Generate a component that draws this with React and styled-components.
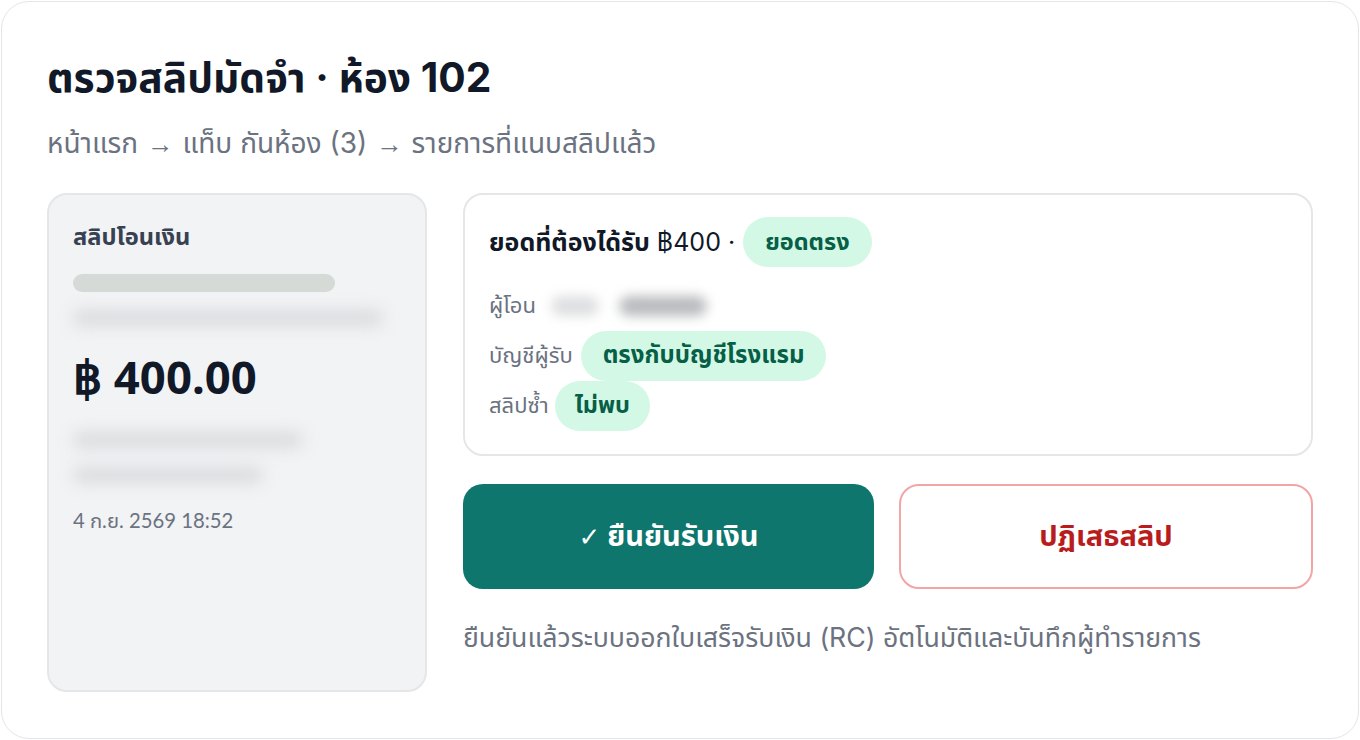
import React from 'react';
import styled, { createGlobalStyle } from 'styled-components';

const GlobalStyle = createGlobalStyle`
  html, body {
    margin: 0;
    padding: 0;
    background: #ffffff;
  }
  body {
    font-family: "Inter", "Noto Sans Thai", "Noto Sans", sans-serif;
    color: #111827;
  }
  * {
    box-sizing: border-box;
  }
`;

const Card = styled.div`
  margin: 1px;
  height: 738px;
  border: 1px solid #e3e5e8;
  border-radius: 28px;
  padding: 50px 45px 46px;
  display: flex;
  flex-direction: column;
`;

const Title = styled.h1`
  margin: 0;
  font-size: 40.7px;
  font-weight: 700;
  line-height: 52px;
  color: #111827;
`;

const Crumbs = styled.div`
  margin-top: 21px;
  font-size: 28px;
  line-height: 36px;
  color: #6b7280;
`;

const Arrow = styled.span`
  font-family: "Noto Sans", sans-serif;
  font-size: 0.95em;
  margin: 0 1px;
`;

const Body = styled.div`
  margin-top: 32px;
  flex: 1;
  display: grid;
  grid-template-columns: 380px 1fr;
  gap: 36px;
`;

const Slip = styled.div`
  background: #f2f3f5;
  border: 2px solid #e4e6e8;
  border-radius: 20px;
  padding: 25px 24px;
  display: flex;
  flex-direction: column;
  font-family: "Lato", "Noto Sans Thai", "Noto Sans", sans-serif;
`;

const SlipTitle = styled.div`
  font-family: "Noto Sans", "Noto Sans Thai", sans-serif;
  font-size: 23.7px;
  font-weight: 700;
  color: #374151;
  line-height: 32px;
`;

const Bar = styled.div`
  margin-top: 22px;
  width: 262px;
  height: 18px;
  border-radius: 9px;
  background: #d5dad7;
`;

const Blur = styled.div`
  margin-top: ${(p) => p.$gap}px;
  width: ${(p) => p.$w}px;
  height: 16px;
  background: #d8dbdd;
  border-radius: 8px;
  filter: blur(8px);
`;

const Amount = styled.div`
  margin-top: 22px;
  font-family: "Noto Sans", "Open Sans", sans-serif;
  font-size: 45.5px;
  font-weight: 700;
  color: #111827;
  line-height: 56px;
`;

const SlipDate = styled.div`
  margin-top: 24px;
  font-size: 20.3px;
  color: #6b7280;
  line-height: 26px;
`;

const Right = styled.div`
  display: flex;
  flex-direction: column;
`;

const Checks = styled.div`
  border: 2px solid #e4e6e8;
  border-radius: 20px;
  padding: 22px 24px 23px;
  display: flex;
  flex-direction: column;
`;

const Headline = styled.div`
  display: flex;
  align-items: center;
  font-size: 25px;
  line-height: 50px;
  color: #111827;
  margin-bottom: 14px;

  b {
    font-weight: 700;
    margin-right: 7px;
  }
`;

const Row = styled.div`
  display: flex;
  align-items: center;
  height: 50px;
  font-size: 22px;
  color: #6b7280;
`;

const Pill = styled.span`
  display: inline-flex;
  align-items: center;
  height: 50px;
  padding: 0 ${(p) => p.$px || 22}px;
  margin-left: ${(p) => p.$ml || 6}px;
  border-radius: 25px;
  background: #d3f8e6;
  color: #065f46;
  font-size: ${(p) => p.$fs || 23.5}px;
  font-weight: 700;
`;

const Sender = styled.span`
  margin-left: 15px;
  display: inline-flex;
  gap: 20px;
  filter: blur(6px);
`;

const Blob = styled.span`
  display: inline-block;
  width: ${(p) => p.$w}px;
  height: 20px;
  border-radius: 10px;
  background: ${(p) => p.$c};
`;

const Actions = styled.div`
  margin-top: 28px;
  display: grid;
  grid-template-columns: 411px 1fr;
  gap: 25px;
`;

const Button = styled.button`
  height: 105px;
  border-radius: 20px;
  font-family: inherit;
  font-size: 29px;
  font-weight: 700;
  cursor: pointer;
  background: ${(p) => (p.$primary ? '#0f766e' : '#ffffff')};
  color: ${(p) => (p.$primary ? '#ffffff' : '#b91c1c')};
  border: ${(p) => (p.$primary ? 'none' : '2px solid #f3a5a5')};
`;

const Check = styled.span`
  font-family: "DejaVu Sans", sans-serif;
  font-weight: 400;
  font-size: 0.9em;
`;

const Note = styled.div`
  margin-top: 31px;
  font-size: 26.7px;
  line-height: 34px;
  color: #6b7280;
`;

export default function App() {
  return (
    <>
      <GlobalStyle />
      <Card>
        <Title>ตรวจสลิปมัดจำ · ห้อง 102</Title>
        <Crumbs>
          หน้าแรก <Arrow>→</Arrow> แท็บ กันห้อง (3) <Arrow>→</Arrow> รายการที่แนบสลิปแล้ว
        </Crumbs>
        <Body>
          <Slip>
            <SlipTitle>สลิปโอนเงิน</SlipTitle>
            <Bar />
            <Blur $gap={18} $w={310} />
            <Amount>฿ 400.00</Amount>
            <Blur $gap={28} $w={230} />
            <Blur $gap={19} $w={190} />
            <SlipDate>4 ก.ย. 2569 18:52</SlipDate>
          </Slip>
          <Right>
            <Checks>
              <Headline>
                <b>ยอดที่ต้องได้รับ</b> ฿400 · <Pill $ml={8}>ยอดตรง</Pill>
              </Headline>
              <Row>
                ผู้โอน
                <Sender>
                  <Blob $w={48} $c="#dedfe1" />
                  <Blob $w={88} $c="#b9bbbe" />
                </Sender>
              </Row>
              <Row>
                บัญชีผู้รับ <Pill $ml={8} $fs={24}>ตรงกับบัญชีโรงแรม</Pill>
              </Row>
              <Row>
                สลิปซ้ำ <Pill $px={20}>ไม่พบ</Pill>
              </Row>
            </Checks>
            <Actions>
              <Button $primary>
                <Check>✓</Check> ยืนยันรับเงิน
              </Button>
              <Button>ปฏิเสธสลิป</Button>
            </Actions>
            <Note>ยืนยันแล้วระบบออกใบเสร็จรับเงิน (RC) อัตโนมัติและบันทึกผู้ทำรายการ</Note>
          </Right>
        </Body>
      </Card>
    </>
  );
}
